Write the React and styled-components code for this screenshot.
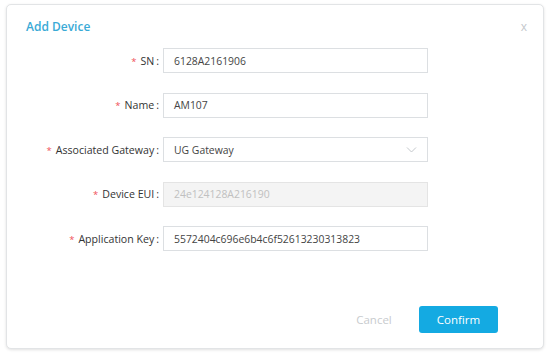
import React from "react";
import styled, { createGlobalStyle } from "styled-components";

const GlobalStyle = createGlobalStyle`
  html, body {
    margin: 0;
    padding: 0;
    background: #ffffff;
    font-family: "Open Sans", "Noto Sans", sans-serif;
  }
`;

const Page = styled.div`
  width: 550px;
  height: 354px;
  padding: 4px 6px 5px 6px;
  box-sizing: border-box;
  display: flex;
`;

const Dialog = styled.div`
  flex: 1;
  display: flex;
  flex-direction: column;
  border: 1px solid #e2e4e6;
  border-radius: 5px;
  box-shadow: 0 1px 3px rgba(0, 0, 0, 0.12);
  background: #fff;
  box-sizing: border-box;
`;

const Header = styled.div`
  display: flex;
  justify-content: space-between;
  align-items: center;
  padding: 14px 16px 0 19px;
  height: 29px;
  box-sizing: border-box;
`;

const Title = styled.h2`
  margin: 0;
  font-size: 12px;
  font-weight: 600;
  color: #3aaad6;
  line-height: 16px;
`;

const Close = styled.button`
  border: none;
  background: transparent;
  color: #c4c8cc;
  font-size: 12px;
  font-family: inherit;
  padding: 0;
  line-height: 16px;
  cursor: pointer;
`;

const Form = styled.form`
  display: flex;
  flex-direction: column;
  gap: 19.5px;
  padding-top: 14px;
`;

const Row = styled.div`
  display: flex;
  align-items: center;
  height: 25px;
`;

const Label = styled.label`
  width: 156px;
  padding-right: 4px;
  box-sizing: border-box;
  text-align: right;
  font-size: 10.6px;
  color: #333;
  white-space: nowrap;
`;

const Star = styled.span`
  color: #f0505a;
  font-size: 9.5px;
  margin-right: 4px;
`;

const Colon = styled.span`
  margin-left: 2px;
`;

const Field = styled.div`
  position: relative;
  width: 265px;
  height: 25px;
  box-sizing: border-box;
  border: 1px solid ${(p) => (p.disabled ? "#e4e4e4" : "#dcdfe2")};
  background: ${(p) => (p.disabled ? "#f4f4f4" : "#fff")};
  display: flex;
  align-items: center;
  padding: 0 10px;
  font-size: 10.4px;
  color: ${(p) => (p.disabled ? "#c0c0c0" : "#444")};
`;

const Arrow = styled.svg`
  position: absolute;
  right: 10px;
  top: 8px;
`;

const Spacer = styled.div`
  flex: 1;
`;

const Footer = styled.div`
  display: flex;
  justify-content: flex-end;
  align-items: center;
  gap: 20px;
  padding: 0 45px 15px 0;
`;

const Button = styled.button`
  height: 27px;
  min-width: ${(p) => (p.primary ? "79px" : "50px")};
  border: none;
  border-radius: 3px;
  font-family: inherit;
  font-size: 11.5px;
  background: ${(p) => (p.primary ? "#14aae2" : "transparent")};
  color: ${(p) => (p.primary ? "#fff" : "#c8cbce")};
  cursor: pointer;
`;

const fields = [
  { label: "SN", value: "6128A2161906" },
  { label: "Name", value: "AM107" },
  { label: "Associated Gateway", value: "UG Gateway", select: true },
  { label: "Device EUI", value: "24e124128A216190", disabled: true },
  { label: "Application Key", value: "5572404c696e6b4c6f52613230313823" },
];

export default function App() {
  return (
    <>
      <GlobalStyle />
      <Page>
        <Dialog>
          <Header>
            <Title>Add Device</Title>
            <Close>x</Close>
          </Header>
          <Form>
            {fields.map((f) => (
              <Row key={f.label}>
                <Label>
                  <Star>*</Star>
                  {f.label}
                  <Colon>:</Colon>
                </Label>
                <Field disabled={f.disabled}>
                  {f.value}
                  {f.select && (
                    <Arrow width="11" height="8" viewBox="0 0 11 8">
                      <path d="M1 1.5 L5.5 6 L10 1.5" fill="none" stroke="#c4c8cc" strokeWidth="1" />
                    </Arrow>
                  )}
                </Field>
              </Row>
            ))}
          </Form>
          <Spacer />
          <Footer>
            <Button type="button">Cancel</Button>
            <Button type="button" primary>Confirm</Button>
          </Footer>
        </Dialog>
      </Page>
    </>
  );
}
